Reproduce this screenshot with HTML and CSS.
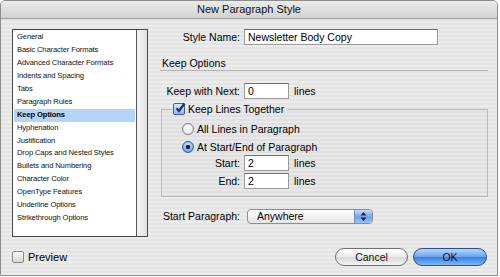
FILE: index.html
```html
<!DOCTYPE html>
<html>
<head>
    <title>New Paragraph Style</title>
    <meta charset="UTF-8">
    <link rel="stylesheet" href="styles.css">
</head>
<body>
    <div class="window">
        <div class="titlebar">New Paragraph Style</div>

        <div class="main">
            <!-- Category list -->
            <div class="sidebar">
                <ul class="categories">
                    <li>General</li>
                    <li>Basic Character Formats</li>
                    <li>Advanced Character Formats</li>
                    <li>Indents and Spacing</li>
                    <li>Tabs</li>
                    <li>Paragraph Rules</li>
                    <li class="selected">Keep Options</li>
                    <li>Hyphenation</li>
                    <li>Justification</li>
                    <li>Drop Caps and Nested Styles</li>
                    <li>Bullets and Numbering</li>
                    <li>Character Color</li>
                    <li>OpenType Features</li>
                    <li>Underline Options</li>
                    <li>Strikethrough Options</li>
                </ul>
                <div class="scroll-track"></div>
            </div>

            <!-- Settings panel -->
            <form class="settings">
                <div class="row">
                    <label class="field-label">Style Name:</label>
                    <input class="text-input wide" type="text" value="Newsletter Body Copy">
                </div>

                <div class="section-title">Keep Options</div>

                <div class="row keep-next">
                    <label class="field-label">Keep with Next:</label>
                    <input class="text-input short" type="text" value="0">
                    <span class="unit">lines</span>
                </div>

                <fieldset class="group">
                    <legend class="group-legend">
                        <span class="checkbox checked">
                            <svg width="12" height="12" viewBox="0 0 12 12"><path d="M2.5 6.2 L5 9 L10.5 1.5" fill="none" stroke="#1d2f6e" stroke-width="2.2"/></svg>
                        </span>
                        Keep Lines Together
                    </legend>
                    <div class="radio-row first">
                        <span class="radio"></span>All Lines in Paragraph
                    </div>
                    <div class="radio-row">
                        <span class="radio on"></span>At Start/End of Paragraph
                    </div>
                    <div class="row sub-row first">
                        <label class="field-label inset">Start:</label>
                        <input class="text-input short" type="text" value="2">
                        <span class="unit">lines</span>
                    </div>
                    <div class="row sub-row">
                        <label class="field-label inset">End:</label>
                        <input class="text-input short" type="text" value="2">
                        <span class="unit">lines</span>
                    </div>
                </fieldset>

                <div class="row start-para">
                    <label class="field-label">Start Paragraph:</label>
                    <div class="popup">
                        <span class="popup-value">Anywhere</span>
                        <span class="popup-arrows">
                            <svg width="7" height="11" viewBox="0 0 7 11"><path d="M3.5 1 L6.5 4.5 L0.5 4.5 Z M3.5 10 L6.5 6.5 L0.5 6.5 Z" fill="#1b2a4a"/></svg>
                        </span>
                    </div>
                </div>
            </form>
        </div>

        <div class="footer">
            <label class="preview"><span class="checkbox plain"></span>Preview</label>
            <div class="buttons">
                <button class="btn" type="button">Cancel</button>
                <button class="btn btn-default" type="button">OK</button>
            </div>
        </div>
    </div>
</body>
</html>
```

FILE: styles.css
```css
body {
    margin: 0;
    font-family: "Liberation Sans", Arial, sans-serif;
    font-size: 10.5px;
    color: #000;
    background: #fff;
}
.window {
    width: 496px;
    height: 274px;
    border: 1px solid #8c8c8c;
    border-radius: 5px 5px 0 0;
    background: repeating-linear-gradient(to bottom, #ececec 0, #ececec 2px, #e4e4e4 2px, #e4e4e4 4px);
    overflow: hidden;
}
.titlebar {
    height: 17px;
    line-height: 17px;
    text-align: center;
    font-size: 11px;
    border-bottom: 1px solid #9c9c9c;
    background: linear-gradient(to bottom, #ebebeb, #d2d2d2);
    color: #111;
}

/* main area */
.main {
    display: flex;
    align-items: flex-start;
    padding: 10px 0 0 11px;
}
.sidebar {
    display: flex;
    width: 134px;
    height: 206px;
    border: 1px solid #474747;
    background: #fff;
}
.categories {
    flex: 1;
    list-style: none;
    margin: 0;
    padding: 1px 0 0 0;
    font-size: 7.6px;
    letter-spacing: -0.12px;
    line-height: 12.93px;
    color: #111;
}
.categories li {
    margin: 0 1px;
    padding-left: 3px;
    white-space: nowrap;
}
.categories li.selected {
    background: #b6d4f6;
    font-weight: bold;
    color: #000;
}
.scroll-track {
    width: 10px;
    border-left: 1px solid #555;
    background: linear-gradient(to right, #f4f4f4, #e2e2e2);
}

.settings {
    width: 328px;
    margin-left: 12px;
}
.row {
    display: flex;
    align-items: center;
    height: 16px;
}
.field-label {
    width: 80px;
    margin-right: 4px;
    text-align: right;
    white-space: nowrap;
}
.field-label.inset {
    width: 78px;
}
.text-input {
    box-sizing: border-box;
    height: 16px;
    padding: 0 3px;
    border: 1px solid #9a9a9a;
    border-top-color: #6f6f6f;
    background: #fff;
    font: inherit;
    color: #000;
    outline: none;
}
.text-input.wide {
    width: 194px;
}
.text-input.short {
    width: 45px;
}
.unit {
    margin-left: 5px;
}
.section-title {
    margin-top: 12px;
    padding: 0 0 1px 2px;
    line-height: 12px;
    border-bottom: 1px solid #b4b4b4;
}
.keep-next {
    margin-top: 12px;
}

/* group box */
.group {
    margin: 3px 0 0 1px;
    padding: 0 0 7px 0;
    border: 1px solid #b9b9b9;
    background: rgba(0, 0, 0, 0.015);
}
.group-legend {
    display: flex;
    align-items: center;
    margin-left: 10px;
    padding: 0 4px 0 1px;
    line-height: 14px;
}
.checkbox {
    box-sizing: border-box;
    display: inline-block;
    width: 12px;
    height: 12px;
    margin-right: 3px;
    border: 1px solid #6b6b6b;
    border-radius: 2px;
    background: linear-gradient(to bottom, #fdfdfd, #d8d8d8);
    position: relative;
}
.checkbox.checked {
    border-color: #4b5f8a;
    background: linear-gradient(to bottom, #d9e8fb, #8fb6ea);
}
.checkbox svg {
    position: absolute;
    left: 0;
    top: -2px;
}
.radio-row {
    display: flex;
    align-items: center;
    height: 18px;
    padding-left: 20px;
}
.radio-row.first {
    margin-top: 4px;
}
.radio {
    box-sizing: border-box;
    width: 12px;
    height: 12px;
    margin-right: 3px;
    border: 1px solid #7c7c7c;
    border-radius: 50%;
    background: radial-gradient(circle at 50% 35%, #fff, #dcdcdc);
}
.radio.on {
    border-color: #3c5a92;
    background: radial-gradient(circle, #132247 0, #132247 2px, transparent 2.5px),
        radial-gradient(circle at 50% 30%, #cfe2fb, #5c93dc);
}
.sub-row {
    margin-top: 2px;
}
.sub-row.first {
    margin-top: -1px;
}

.start-para {
    margin-top: 11px;
}
.popup {
    display: flex;
    align-items: stretch;
    box-sizing: border-box;
    width: 126px;
    height: 15px;
    margin-left: 3px;
    border: 1px solid #8e8e8e;
    border-radius: 4px;
    background: linear-gradient(to bottom, #ffffff, #e6e6e6);
    overflow: hidden;
}
.popup-value {
    flex: 1;
    padding-left: 9px;
    line-height: 13px;
}
.popup-arrows {
    display: flex;
    align-items: center;
    justify-content: center;
    width: 17px;
    border-left: 1px solid #6d8ec4;
    background: linear-gradient(to bottom, #c4dcfa, #6ea2e6 55%, #9fc3f2);
}

/* footer */
.footer {
    display: flex;
    align-items: center;
    justify-content: space-between;
    margin-top: 10px;
    padding: 0 10px 0 11px;
    height: 19px;
}
.preview {
    display: flex;
    align-items: center;
    font-size: 11px;
}
.checkbox.plain {
    border-color: #8a8a8a;
    margin-right: 4px;
}
.buttons {
    display: flex;
    gap: 5px;
}
.btn {
    box-sizing: border-box;
    width: 73px;
    height: 18px;
    padding: 0;
    border: 1px solid #707070;
    border-radius: 9px;
    background: linear-gradient(to bottom, #ffffff, #e9e9e9 50%, #d9d9d9 51%, #f4f4f4);
    font: inherit;
    color: #111;
}
.btn-default {
    width: 74px;
    border-color: #2d4f8e;
    background: linear-gradient(to bottom, #b9d6fb, #6aa4ef 50%, #3a7ee0 51%, #7cb7f8);
}
```
